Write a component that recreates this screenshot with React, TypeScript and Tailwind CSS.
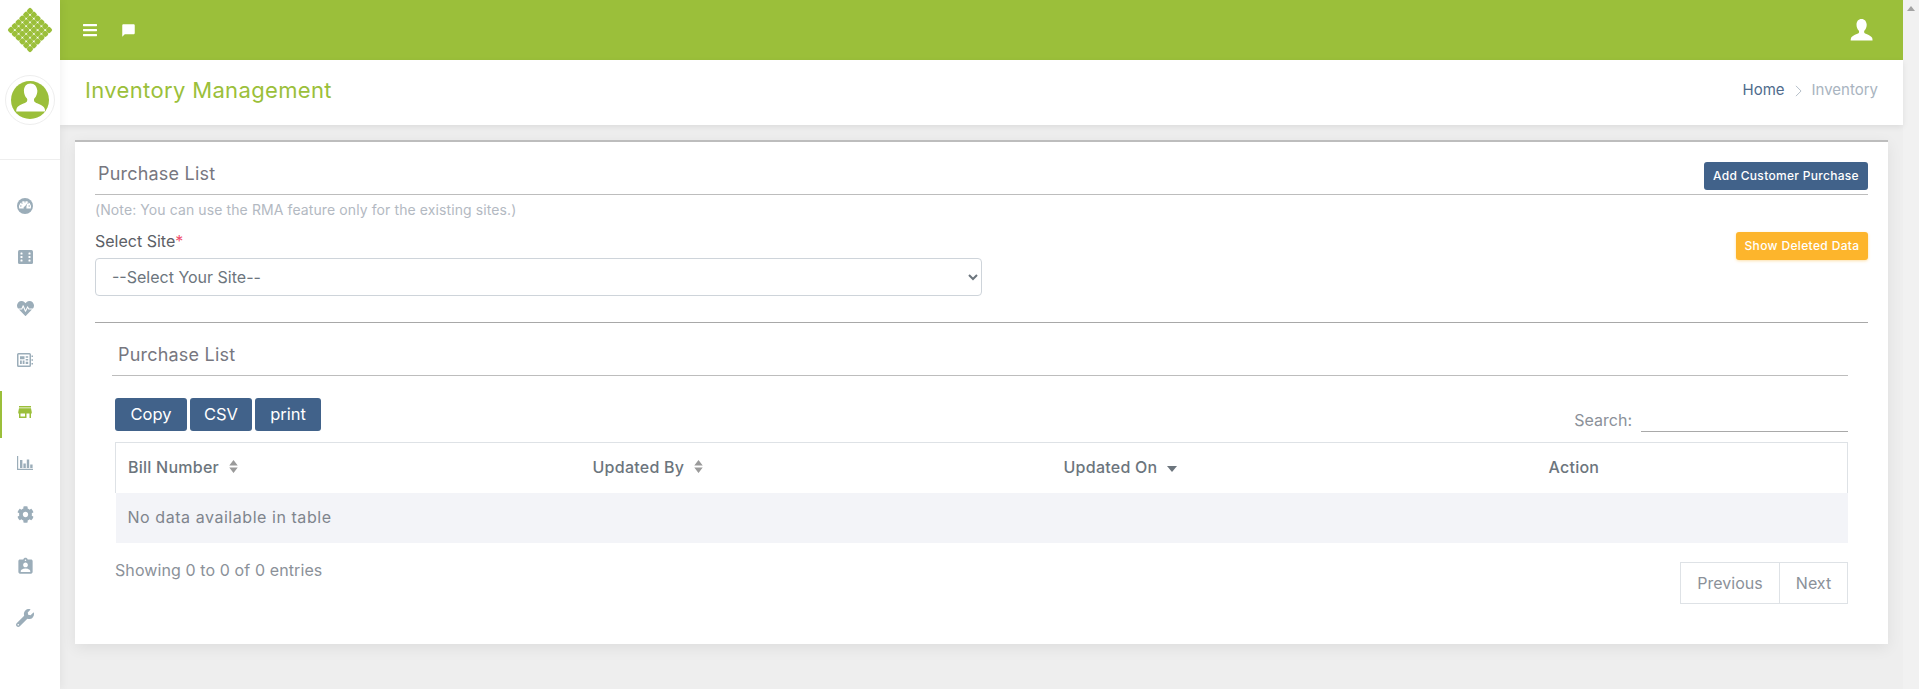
import { FaBars, FaCog, FaHeartbeat, FaWrench } from 'react-icons/fa';
import { MdAssignmentInd, MdChatBubble, MdStore } from 'react-icons/md';

function GaugeIcon({ size }: { size: number }) {
  return (
    <svg viewBox="0 0 16 16" width={size} height={size}>
      <circle cx="8" cy="8" r="8" fill="currentColor" />
      <path d="M2.200 10.500a6 6 0 1 1 11.600 0z" fill="#fff" />
      <path d="M8 2.800v1.700M4.300 4.400l1.100 1.100M11.700 4.400l-1.100 1.100M3 8h1.500M11.500 8H13" stroke="currentColor" strokeWidth="1.100" />
      <path d="M7 9.500L10.200 5.600 9 10.200z" fill="currentColor" />
      <circle cx="8" cy="10" r="1.500" fill="currentColor" />
    </svg>
  );
}

function FilmIcon({ size }: { size: number }) {
  const holes = [];
  for (const y of [2.5, 6, 9.5]) {
    holes.push(<rect key={`l${y}`} x="2.500" y={y} width="2" height="2" rx="0.6" fill="#fff" />);
    holes.push(<rect key={`r${y}`} x="10.500" y={y} width="2" height="2" rx="0.6" fill="#fff" />);
  }
  return (
    <svg viewBox="0 0 15 14" width={size} height={(size * 14) / 15}>
      <rect width="15" height="14" rx="1.500" fill="currentColor" />
      {holes}
    </svg>
  );
}

function NewsIcon({ size }: { size: number }) {
  return (
    <svg viewBox="0 0 16 14" width={size} height={(size * 14) / 16} fill="currentColor">
      <path d="M1.500 0h11A1.500 1.500 0 0 1 14 1.500v11a1.500 1.500 0 0 1-1.500 1.500h-11A1.500 1.500 0 0 1 0 12.500v-11A1.500 1.500 0 0 1 1.500 0zm0 1.500v11h11v-11z" fillRule="evenodd" />
      <path d="M3 3.200h4.500v3H3zM3 7.500h1.800v3.500H3zM5.700 7.500h1.800v3.500H5.700zM8.700 3.200h2.500v1.500H8.700zM8.700 6h2.500v1.500H8.700zM8.700 8.800h2.500v2.200H8.700z" />
      <path d="M14.500 2.500H16V4h-1.500zM14.500 6.200H16v1.500h-1.500zM14.500 10H16v1.500h-1.500z" />
    </svg>
  );
}

function ChartIcon({ size }: { size: number }) {
  return (
    <svg viewBox="0 0 16 14" width={size} height={(size * 14) / 16} fill="currentColor">
      <path d="M0 0h1.200v12.800H16V14H0zM3 4h2.400v8H3zM6.400 7.500h2.400V12H6.400zM9.800 3.500h2.400V12H9.800zM13.200 8.500h2.400V12h-2.400z" />
    </svg>
  );
}

const navItems = [
  { icon: GaugeIcon, size: 16 },
  { icon: FilmIcon, size: 15 },
  { icon: FaHeartbeat, size: 17 },
  { icon: NewsIcon, size: 16 },
  { icon: MdStore, size: 18, active: true },
  { icon: ChartIcon, size: 16 },
  { icon: FaCog, size: 17 },
  { icon: MdAssignmentInd, size: 19 },
  { icon: FaWrench, size: 18 },
];

function Bust({ className }: { className?: string }) {
  return (
    <svg viewBox="0 0 24 24" className={className} fill="currentColor">
      <path d="M12 1c-3 0-4.800 2.300-4.800 5.400 0 2.300.9 4.300 2.100 5.500.5.600.5 1.700 0 2.400-.8 1.100-6.300 2.100-7.300 4.700-.3.800-.4 1.500-.4 2.500h21c0-1-.1-1.700-.4-2.500-1-2.600-6.500-3.600-7.300-4.700-.5-.7-.5-1.800 0-2.400 1.200-1.200 2.100-3.200 2.100-5.500C16.800 3.300 15 1 12 1z" />
    </svg>
  );
}

function Logo() {
  const cells = [];
  for (let r = 0; r < 6; r++) {
    for (let c = 0; c < 6; c++) {
      cells.push(<rect key={`${r}-${c}`} x={c * 5.5} y={r * 5.5} width={5.5} height={5.5} rx={1.900} fill="#9bbf3a" />);
    }
  }
  return (
    <svg viewBox="-8 -8 49 49" className="w-[48px] h-[48px]">
      <g transform="rotate(45 16.500 16.500)">{cells}</g>
    </svg>
  );
}

function SortArrows() {
  return (
    <svg viewBox="0 0 10 16" className="w-[11px] h-[15px] ml-[9px] inline-block" fill="#9a9a9a">
      <path d="M5 1l4.500 6H.5zM5 15L.5 9h9z" />
    </svg>
  );
}

function TableButton({ label, width }: { label: string; width: string }) {
  return (
    <button className={`${width} h-[33px] bg-[#41628a] text-white text-[16.500px] rounded-[3px]`}>{label}</button>
  );
}

export default function App() {
  return (
    <div className="flex h-[689px] w-full overflow-hidden bg-[#eeeeee] text-[#6c757d] font-['Inter','Liberation_Sans',sans-serif]">
      <aside className="w-[60px] shrink-0 bg-white z-20 flex flex-col shadow-[2px_0_8px_rgba(0,0,0,0.05)]">
        <div className="h-[60px] flex items-center justify-center">
          <Logo />
        </div>
        <div className="h-[100px] border-b border-[#eeeeee] flex justify-center pt-[15px]">
          <div className="w-[50px] h-[50px] rounded-full border border-[#eeeeee] flex items-center justify-center">
            <div className="w-[38px] h-[38px] rounded-full bg-[#9bbf3a] text-white flex items-end justify-center overflow-hidden pb-[4px]">
              <Bust className="w-[33px] h-[33px] shrink-0" />
            </div>
          </div>
        </div>
        <nav className="pt-[20px] flex flex-col">
          {navItems.map((item, i) => {
            const Icon = item.icon;
            return (
              <div
                key={i}
                className={`relative h-[51.500px] flex items-center justify-center pr-[10px] ${item.active ? 'text-[#9bbf3a]' : 'text-[#9badb9]'}`}
              >
                {item.active && <span className="absolute left-0 bottom-0 w-[2px] h-[47px] bg-[#9bbf3a]" />}
                <Icon size={item.size} />
              </div>
            );
          })}
        </nav>
      </aside>

      <div className="flex-1 min-w-0 flex flex-col">
        <header className="h-[60px] shrink-0 bg-[#9bbf3a] flex items-center justify-between pl-[22px] pr-[29px] text-white">
          <div className="flex items-center gap-[23px]">
            <FaBars size={16} />
            <MdChatBubble size={15} />
          </div>
          <Bust className="w-[25px] h-[25px]" />
        </header>

        <div className="h-[65px] shrink-0 bg-white flex items-center justify-between pl-[25px] pr-[25px] pb-[4px] shadow-[0_2px_6px_rgba(0,0,0,0.08)] z-10">
          <h1 className="text-[22px] text-[#9bbf3a] tracking-[0.35px]">Inventory Management</h1>
          <div className="flex items-center text-[15px]">
            <span className="text-[#4f6b8c]">Home</span>
            <span className="mx-[10px] text-[#a9b4c0]">
              <svg viewBox="0 0 8 14" className="w-[7px] h-[12px]" fill="none" stroke="currentColor" strokeWidth="1">
                <path d="M1 1l6 6-6 6" />
              </svg>
            </span>
            <span className="text-[#a9b4c0]">Inventory</span>
          </div>
        </div>

        <main className="flex-1 px-[15px] pt-[15px]">
          <section className="h-[504px] bg-white border-t-2 border-[#bdbdbd] px-[20px] shadow-[0_4px_14px_rgba(0,0,0,0.07)]">
            <div className="h-[53px] border-b border-[#bdbdbd] flex items-end justify-between pb-[4px]">
              <h2 className="text-[18px] tracking-[0.2px] pl-[3px] pb-[3px] text-[#77777f]">Purchase List</h2>
              <button className="w-[164px] h-[28px] bg-[#41628a] text-white text-[12px] tracking-[0.3px] font-medium rounded-[3px]">
                Add Customer Purchase
              </button>
            </div>
            <p className="h-[28px] flex items-center text-[14px] tracking-[0.1px] text-[#b3b9c2]">
              (Note: You can use the RMA feature only for the existing sites.)
            </p>
            <div className="flex justify-between items-start">
              <div>
                <label className="block h-[30px] mt-[3px] leading-[30px] text-[16px] text-[#5c6066]">
                  Select Site<span className="text-[#f0506e]">*</span>
                </label>
                <select className="block mt-[2px] w-[887px] h-[38px] pl-[12px] bg-white border border-[#ced4da] rounded-[4px] text-[16px] text-[#6c757d]">
                  <option>--Select Your Site--</option>
                </select>
              </div>
              <button className="mt-[9px] w-[132px] h-[28px] bg-[#fdb52c] text-white text-[12px] tracking-[0.35px] font-medium rounded-[3px] shadow-[0_1px_3px_rgba(253,181,44,0.4)]">
                Show Deleted Data
              </button>
            </div>
            <hr className="mt-[26px] border-t border-[#a8a8a8]" />

            <div className="ml-[17px] mr-[20px]">
              <div className="h-[53px] border-b border-[#bdbdbd] flex items-center pl-[6px] pt-[10px]">
                <h3 className="text-[18px] tracking-[0.2px] text-[#77777f]">Purchase List</h3>
              </div>
              <div className="ml-[3px] mt-[22px] flex items-end justify-between">
                <div className="flex gap-[3px]">
                  <TableButton label="Copy" width="w-[72px]" />
                  <TableButton label="CSV" width="w-[62px]" />
                  <TableButton label="print" width="w-[66px]" />
                </div>
                <div className="flex items-end -mb-px">
                  <span className="text-[16px] text-[#8b9199] mr-[9px]">Search:</span>
                  <div className="w-[207px] h-[27px] border-b border-[#a9a9a9]" />
                </div>
              </div>

              <table className="ml-[3px] mt-[11px] w-[1733px] table-fixed border-collapse text-[16px]">
                <colgroup>
                  <col className="w-[464px]" />
                  <col className="w-[471px]" />
                  <col className="w-[485px]" />
                  <col />
                </colgroup>
                <thead>
                  <tr className="h-[50px] border border-b-0 border-[#dee2e6] text-left">
                    <th className="pl-[12px] pb-[2px] font-medium tracking-[0.25px]">
                      <span className="inline-flex items-center">Bill Number<SortArrows /></span>
                    </th>
                    <th className="pl-[13px] pb-[2px] font-medium tracking-[0.25px]">
                      <span className="inline-flex items-center">Updated By<SortArrows /></span>
                    </th>
                    <th className="pl-[13px] pb-[2px] font-medium tracking-[0.25px]">
                      <span className="inline-flex items-center">
                        Updated On
                        <svg viewBox="0 0 10 6" className="w-[10px] h-[6px] ml-[10px] mt-[4px]" fill="#6c757d">
                          <path d="M0 0h10L5 6z" />
                        </svg>
                      </span>
                    </th>
                    <th className="pl-[13px] pb-[2px] font-medium tracking-[0.25px]">Action</th>
                  </tr>
                </thead>
                <tbody>
                  <tr className="h-[50px] bg-[#f3f4f8]">
                    <td colSpan={4} className="pl-[12px] pb-[2px] text-[#7f858d] tracking-[0.55px]">No data available in table</td>
                  </tr>
                </tbody>
              </table>

              <div className="ml-[3px] mt-[19px] flex items-start justify-between">
                <span className="text-[16px] leading-[16px] tracking-[0.1px] text-[#8b9199]">Showing 0 to 0 of 0 entries</span>
                <div className="flex text-[16px] text-[#8b9199]">
                  <div className="w-[100px] h-[42px] border border-[#dee2e6] flex items-center justify-center">Previous</div>
                  <div className="w-[68px] h-[42px] border border-l-0 border-[#dee2e6] flex items-center justify-center">Next</div>
                </div>
              </div>
            </div>
          </section>
        </main>
      </div>

      <div className="w-[16px] shrink-0 bg-[#f1f1f1] flex justify-center pt-[6px]">
        <div className="w-0 h-0 border-x-[4px] border-x-transparent border-b-[5px] border-b-[#a3a3a3]" />
      </div>
    </div>
  );
}
